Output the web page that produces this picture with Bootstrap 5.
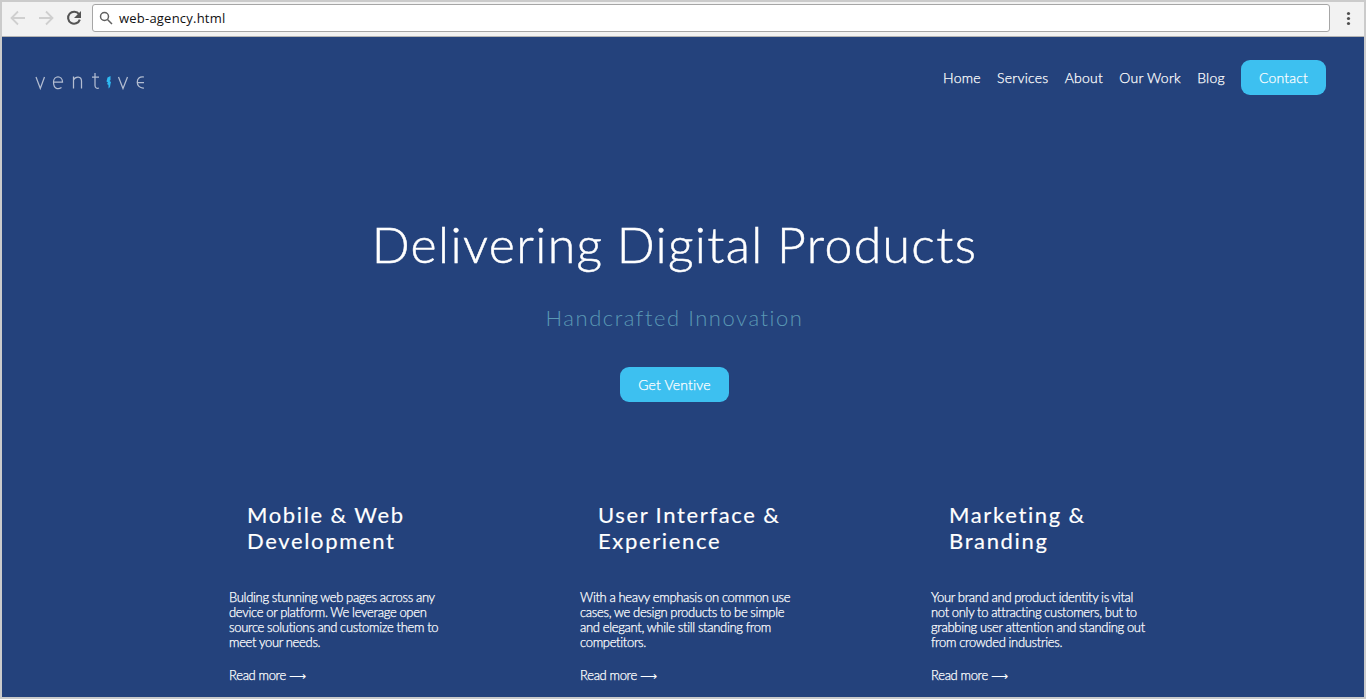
<!DOCTYPE html>
<html lang="en">
<head>
<meta charset="utf-8">
<meta name="viewport" content="width=device-width, initial-scale=1">
<title>Ventive</title>
<link href="https://cdn.jsdelivr.net/npm/bootstrap@5.3.0/dist/css/bootstrap.min.css" rel="stylesheet">
<style>
html,body{height:100%;overflow:hidden}
body{font-family:Lato,sans-serif;color:#fff;background:#24427c;font-variant-ligatures:none}
.window{height:699px;border:2px solid #cbcbcb;background:#24427c;overflow:hidden}
.toolbar{height:35px;background:#f2f2f2;border-bottom:1px solid #b4b4b4}
.address{height:28px;border:1px solid #a6a6a6;border-radius:3px;background:#fff;color:#111;font:13px "Open Sans",sans-serif;margin-right:16px;margin-bottom:2px;padding-left:6px}
.address span{margin-left:6px;letter-spacing:.22px}
.topnav{padding:23px 38px 0 33px}
.topnav a,.pill{font-size:14px;font-weight:300;color:#fff;text-decoration:none;letter-spacing:.26px;-webkit-text-stroke:.25px #fff}
.links{gap:16.1px}
.topnav a.pill,.pill{display:block;width:85px;height:35px;line-height:35px;background:#3dc0f0;border-radius:9px;text-align:center;letter-spacing:.16px}
.pill.wide{width:109px}
h1{font-size:50px;font-weight:300;letter-spacing:1.35px;word-spacing:-1.6px;line-height:60px;margin:119px 0 0;-webkit-text-stroke:.5px #fff}
.tag{font-size:22px;font-weight:300;letter-spacing:1.54px;line-height:26px;color:#5a98b4;margin:31px 0 36px}
.hero{width:1345px}
.features{margin:100px 0 0 227px;gap:131px}
.feature{width:220px}
h2{font-size:22px;font-weight:400;letter-spacing:1.65px;word-spacing:-.6px;line-height:26px;margin:0 0 36px 18px;white-space:nowrap;-webkit-text-stroke:.15px #fff}
.feature p{font-size:13px;font-weight:300;letter-spacing:-.31px;word-spacing:-.2px;line-height:15px;margin:0 0 18px;white-space:nowrap;-webkit-text-stroke:.25px #fff}
.arrow{font-size:12px;-webkit-text-stroke:0;line-height:1}
</style>
</head>
<body>
<div class="window">
<div class="toolbar d-flex align-items-center">
<svg width="90" height="35" fill="none" stroke="#cfcfcf" stroke-width="1.8"><path d="M23 16H10M16 9.500L9.500 16l6.500 6.500M37 16h13M44 9.500l6.500 6.500-6.500 6.500"/><path stroke="#545454" stroke-width="2.100" d="M77 12.200A6 6 0 1 0 77.800 17.600"/><path fill="#545454" stroke="none" d="M79 9v7h-7z"/></svg>
<div class="address flex-grow-1 d-flex align-items-center"><svg width="14" height="14" fill="none" stroke="#606060" stroke-width="1.500"><circle cx="5.500" cy="5.500" r="4"/><path d="M8.500 8.500l4.500 4.500"/></svg><span>web-agency.html</span></div>
<svg width="18" height="35" fill="#505050"><circle cx="2.500" cy="11.500" r="1.600"/><circle cx="2.500" cy="16.500" r="1.600"/><circle cx="2.500" cy="21.500" r="1.600"/></svg>
</div>
<nav class="topnav d-flex justify-content-between">
<svg width="112" height="35" fill="none" stroke="#b3bdd1" stroke-width="1.250" role="img" aria-label="ventive"><path d="M1 17l4.300 11.500L9.500 17M18.500 22h9c0-7-9-7-9 0 0 7.500 5 7.500 8 5.500M38.500 28.500V16.500m0 3.500c2-4 8-4 8 1v7.500M60 13v12.500c0 2.500 2 3.200 4 2.500M57 17h7M83.500 17l4.500 11.500 4.500-11.500M109 17c-9-2-9 12 0 11M102.500 22.500h6.500"/><path fill="#2ebaf2" stroke="none" d="M75.500 16l-3 1.500-1 4 1.500 1-1 1.500 1.500 1v3.500l1.500-1.500.5-3 .5-2-1.500-1 1-1z"/></svg>
<div class="links d-flex align-items-center"><a href="#">Home</a><a href="#">Services</a><a href="#">About</a><a href="#">Our Work</a><a href="#">Blog</a><a class="pill" href="#">Contact</a></div>
</nav>
<header class="hero text-center"><h1>Delivering Digital Products</h1><p class="tag">Handcrafted Innovation</p><a class="pill wide mx-auto" href="#">Get Ventive</a></header>
<main class="features d-flex">
<section class="feature"><h2>Mobile &amp; Web<br>Development</h2><p>Bulding stunning web pages across any<br>device or platform. We leverage open<br>source solutions and customize them to<br>meet your needs.</p><p>Read more <span class="arrow">⟶</span></p></section>
<section class="feature"><h2>User Interface &amp;<br>Experience</h2><p>With a heavy emphasis on common use<br>cases, we design products to be simple<br>and elegant, while still standing from<br>competitors.</p><p>Read more <span class="arrow">⟶</span></p></section>
<section class="feature"><h2>Marketing &amp;<br>Branding</h2><p>Your brand and product identity is vital<br>not only to attracting customers, but to<br>grabbing user attention and standing out<br>from crowded industries.</p><p>Read more <span class="arrow">⟶</span></p></section>
</main>
</div>
<script src="https://cdn.jsdelivr.net/npm/bootstrap@5.3.0/dist/js/bootstrap.bundle.min.js"></script>
</body>
</html>
